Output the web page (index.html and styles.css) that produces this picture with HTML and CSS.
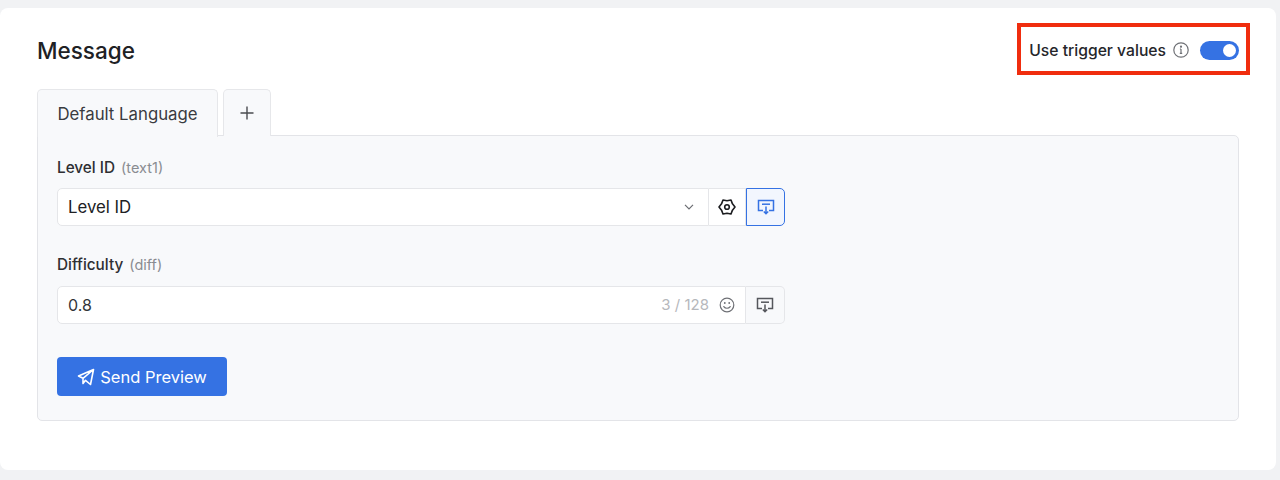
FILE: index.html
```html
<!DOCTYPE html>
<html lang="en">
<head>
<meta charset="utf-8">
<title>Message</title>
<link rel="stylesheet" href="styles.css">
</head>
<body>
<main class="card">
  <header class="head">
    <h1 class="title">Message</h1>
    <div class="trigger">
      <span class="trigger-label">Use trigger values</span>
      <svg class="info" viewBox="0 0 16 16" width="16" height="16" fill="none" stroke="#6f7176" stroke-width="1.2"><circle cx="8" cy="8" r="7.2"/><path d="M8 7v4.400M6.800 11.400h2.400M6.900 7H8"/><circle cx="8" cy="4.700" r=".5" fill="#6f7176"/></svg>
      <span class="switch"><span class="knob"></span></span>
    </div>
  </header>
  <div class="tabs">
    <div class="tab active">Default Language</div>
    <div class="tab add"><svg viewBox="0 0 14 14" width="14" height="14" fill="none" stroke="#4a4c50" stroke-width="1.4"><path d="M7 .5v13M.5 7h13"/></svg></div>
  </div>
  <section class="panel">
    <div class="field">
      <div class="label">Level ID <span class="hint">(text1)</span></div>
      <div class="control">
        <div class="select"><span>Level ID</span>
          <svg viewBox="0 0 10 6" width="10" height="6" fill="none" stroke="#6b6d72" stroke-width="1.2"><path d="M1 .8l4 4 4-4"/></svg>
        </div>
        <div class="addon gear">
          <svg viewBox="0 0 18 18" width="18" height="18" fill="none" stroke="#1c1d20" stroke-width="1.6" stroke-linejoin="round"><path d="M17 9l-2.540-3.150L13 2.070 9 2.700 5 2.070 3.540 5.850 1 9l2.540 3.150L5 15.930l4-.63 4 .63 1.460-3.780z"/><circle cx="9" cy="9" r="2.300"/></svg>
        </div>
        <div class="addon picked">
          <svg viewBox="0 0 18 18" width="18" height="18" fill="none" stroke="#3572e3" stroke-width="1.5"><path d="M6 12.500H1.500v-10h15v10H12"/><path d="M5 6.200h8"/><path d="M9 8.500v7M6.800 13.500 9 15.700l2.200-2.200"/></svg>
        </div>
      </div>
    </div>
    <div class="field">
      <div class="label">Difficulty <span class="hint">(diff)</span></div>
      <div class="control">
        <div class="input"><span>0.8</span><span class="count">3 / 128</span>
          <svg viewBox="0 0 16 16" width="16" height="16" fill="none" stroke="#6f7176" stroke-width="1.2" stroke-linecap="round"><circle cx="8" cy="8" r="6.800"/><path d="M4.800 9.600c1.600 2.200 4.800 2.200 6.400 0"/><path d="M5.800 6h.01M10.200 6h.01" stroke-width="1.800"/></svg>
        </div>
        <div class="addon plain">
          <svg viewBox="0 0 18 18" width="18" height="18" fill="none" stroke="#55575c" stroke-width="1.5"><path d="M6 12.500H1.500v-10h15v10H12"/><path d="M5 6.200h8"/><path d="M9 8.500v7M6.800 13.500 9 15.700l2.200-2.200"/></svg>
        </div>
      </div>
    </div>
    <button class="send" type="button">
      <svg viewBox="0 0 18 18" width="18" height="18" fill="none" stroke="#fff" stroke-width="1.6" stroke-linejoin="round"><path d="M16.500 1.500 1.500 8l4.500 2.300L16.500 1.500 13.500 16.500 8.500 12.300 6 15.500v-5.200"/></svg>
      Send Preview
    </button>
  </section>
</main>
<div class="highlight"></div>
</body>
</html>
```
FILE: styles.css
```css
* { box-sizing: border-box; }
html, body { height: 100%; }
body {
  margin: 0;
  padding: 8px 4px 10px 0;
  background: #f1f2f4;
  font-family: Inter, "Liberation Sans", sans-serif;
  color: #1f2023;
  overflow: hidden;
}
.card {
  height: 462px;
  background: #fff;
  border-radius: 8px;
  padding: 0 37px;
}
.head {
  height: 81px;
  display: flex;
  align-items: center;
  justify-content: space-between;
  padding-top: 3px;
}
.title { margin: 0; font-size: 22.500px; font-weight: 550; color: #202124; }
.trigger { display: flex; align-items: center; }
.trigger-label { font-size: 15.700px; font-weight: 500; color: #25262a; }
.info { margin-left: 7px; }
.switch {
  margin-left: 11px;
  width: 39px;
  height: 19px;
  border-radius: 10px;
  background: #3572e3;
  display: flex;
  align-items: center;
  justify-content: flex-end;
  padding-right: 3px;
}
.knob { width: 13px; height: 13px; border-radius: 50%; background: #fff; }
.tabs { display: flex; gap: 5px; position: relative; z-index: 1; }
.tab {
  height: 47px;
  border: 1px solid #e6e7ea;
  border-bottom: 0;
  border-radius: 5px 5px 0 0;
  background: #f8f9fb;
  display: flex;
  align-items: center;
  justify-content: center;
  font-size: 16.800px;
  color: #3a3b3f;
}
.tab.active { width: 181px; height: 48px; margin-bottom: -1px; }
.tab.add { width: 48px; }
.panel {
  height: 286px;
  margin-top: -1px;
  border: 1px solid #e3e4e8;
  border-radius: 0 5px 5px 5px;
  background: #f8f9fb;
  padding: 22px 19px 0;
}
.field { margin-bottom: 29px; }
.field:first-child .control { margin-top: 10px; }
.label { font-size: 15.300px; line-height: 20px; font-weight: 500; color: #2e2f33; }
.hint { font-size: 14.500px; font-weight: 400; color: #8a8c91; margin-left: 2px; }
.control { display: flex; width: 728px; height: 38px; margin-top: 11px; }
.select, .input {
  flex: 1;
  background: #fff;
  border: 1px solid #e5e6e9;
  display: flex;
  align-items: center;
  border-radius: 5px 0 0 5px;
}
.select {
  justify-content: space-between;
  padding: 0 14px 1px 10px;
  font-size: 16.800px;
  color: #202124;
}
.input { padding: 0 10px 1px; font-size: 16px; color: #33353a; }
.count { margin-left: auto; margin-right: 10px; font-size: 15px; color: #b6b8bc; }
.addon {
  width: 39px;
  display: flex;
  align-items: center;
  justify-content: center;
  background: #fff;
  border: 1px solid #e5e6e9;
  border-left: 0;
}
.gear { width: 37px; }
.picked {
  background: #f2f6fe;
  border: 1px solid #3572e3;
  border-radius: 0 5px 5px 0;
}
.plain { background: #f8f9fb; border-radius: 0 5px 5px 0; }
.send {
  width: 170px;
  height: 39px;
  margin-top: 33px;
  border: 0;
  border-radius: 4px;
  background: #3572e3;
  color: #fff;
  font: 400 16.500px Inter, "Liberation Sans", sans-serif;
  display: flex;
  align-items: center;
  justify-content: center;
  gap: 5px;
}
.highlight {
  position: absolute;
  left: 1017px;
  top: 23px;
  width: 233px;
  height: 52px;
  border: 4px solid #f02d0e;
}
```
